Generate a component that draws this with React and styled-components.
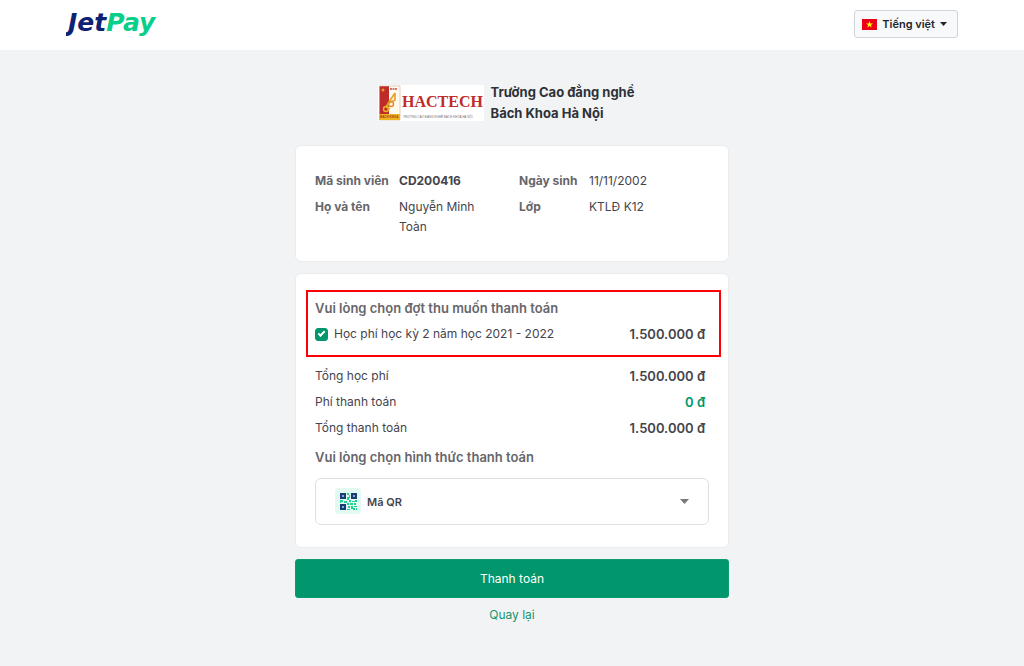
import React, { useState } from "react";
import styled, { createGlobalStyle } from "styled-components";

const GlobalStyle = createGlobalStyle`
  *, *::before, *::after { box-sizing: border-box; }
  body {
    margin: 0;
    background: #f2f3f5;
    color: #44444c;
    font-family: Inter, "Noto Sans", sans-serif;
    font-size: 13px;
    line-height: 20px;
  }
  button, select { font: inherit; color: inherit; }
`;

const Header = styled.header`
  background: #fff;
  padding: 0 24px;
`;

const HeaderInner = styled.div`
  max-width: 892px;
  min-height: 50px;
  margin: 0 auto;
  display: flex;
  align-items: center;
  justify-content: space-between;
`;

const HomeLink = styled.a`
  display: flex;
`;

const LanguageButton = styled.button`
  display: flex;
  align-items: center;
  gap: 5px;
  height: 28px;
  margin-top: -2px;
  padding: 0 10px 0 7px;
  border: 1px solid #d2d4d8;
  border-radius: 3px;
  background: #f8f9fa;
  color: #212529;
  font-size: 11px;
  font-weight: 600;
  cursor: pointer;
`;

const Main = styled.main`
  width: 100%;
  max-width: 434px;
  margin: 0 auto;
  padding: 32px 0 40px;
`;

const School = styled.div`
  display: flex;
  justify-content: center;
  align-items: center;
  gap: 7px;
  margin-bottom: 21px;
  padding-right: 12px;
`;

const SchoolName = styled.h1`
  margin: 0;
  color: #2d3138;
  font-size: 13px;
  line-height: 21px;
  font-weight: 700;
`;

const Card = styled.section`
  background: #fff;
  border: 1px solid #ebecee;
  border-radius: 6px;
  margin-bottom: 11px;
`;

const StudentCard = styled(Card)`
  padding: 25px 19px 24px;
`;

const StudentDetails = styled.dl`
  margin: 0;
  display: grid;
  grid-template-columns: 84px 1fr 70px 1fr;
  row-gap: 6px;
`;

const Term = styled.dt`
  color: #66666b;
  font-size: 12px;
  font-weight: 700;
  white-space: nowrap;
`;

const Detail = styled.dd`
  margin: 0;
  padding-right: 24px;
  font-size: 12px;
  font-weight: ${(p) => (p.$strong ? 700 : 400)};
`;

const PaymentCard = styled(Card)`
  padding: 16px 7px 22px 10px;
`;

const Highlight = styled.div`
  border: 2px solid #fb0007;
  padding: 6px 14px 11px 7px;
`;

const Heading = styled.h2`
  margin: 0;
  color: #66666b;
  font-size: 13px;
  line-height: 20px;
  font-weight: 600;
`;

const Row = styled.div`
  display: flex;
  justify-content: space-between;
  font-size: 12px;
`;

const Summary = styled.div`
  display: grid;
  gap: 6px;
  padding: 9px 16px 9px 9px;
`;

const Fee = styled(Row)`
  margin-top: 6px;
`;

const FeeLabel = styled.label`
  display: flex;
  align-items: center;
  gap: 6px;
`;

const Checkbox = styled.input`
  appearance: none;
  width: 13px;
  height: 13px;
  margin: 0;
  border: 1px solid #01966b;
  border-radius: 3px;
  background: #fff;
  display: grid;
  place-items: center;
  &:checked { background: #01966b; }
  &:checked::before {
    content: "";
    width: 7px;
    height: 4px;
    border: solid #fff;
    border-width: 0 0 2px 2px;
    transform: translateY(-1px) rotate(-45deg);
  }
`;

const Amount = styled.strong`
  font-size: 13px;
  font-weight: 600;
  color: ${(p) => (p.$free ? "#01966b" : "#44444c")};
`;

const Method = styled.div`
  padding: 0 12px 0 9px;
`;

const SelectBox = styled.div`
  position: relative;
  margin-top: 11px;
`;

const MethodSelect = styled.select`
  appearance: none;
  display: block;
  width: 100%;
  height: 47px;
  padding: 0 40px 0 51px;
  border: 1px solid #dfe0e3;
  border-radius: 6px;
  background: #fff;
  font-size: 11px;
  font-weight: 600;
`;

const QrIcon = styled.svg`
  position: absolute;
  left: 20px;
  top: 10px;
  pointer-events: none;
`;

const SelectCaret = styled.svg`
  position: absolute;
  right: 20px;
  top: 21px;
  pointer-events: none;
`;

const PayButton = styled.button`
  display: block;
  width: 100%;
  height: 39px;
  border: 1px solid #0b9b72;
  border-radius: 3px;
  background: #01966b;
  color: #fff;
  font-size: 12px;
  cursor: pointer;
`;

const BackLink = styled.a`
  display: block;
  width: fit-content;
  margin: 7px auto 0;
  color: #16966f;
  font-size: 12px;
  text-decoration: none;
`;

function JetPayLogo() {
  return (
    <svg width="100" height="38" viewBox="0 0 100 38" role="img" aria-label="JetPay">
      <text x="2" y="25" fontFamily="DejaVu Sans, sans-serif" fontSize="25" fontWeight="700" fontStyle="italic" fill="#0d2275">
        Jet<tspan fill="#08cf8a">Pay</tspan>
      </text>
    </svg>
  );
}

function VietnamFlag() {
  return (
    <svg width="15" height="11" viewBox="0 0 15 11" aria-hidden="true">
      <path fill="#ec0015" d="M0 0h15v11H0z" />
      <path fill="#ff0" d="m7.5 2 .85 2.5H11L8.9 6l.8 2.6-2.2-1.6-2.2 1.6L6.1 6 4 4.500h2.650z" />
    </svg>
  );
}

function HactechLogo() {
  return (
    <svg width="106" height="38" viewBox="0 0 106 38" role="img" aria-label="HACTECH">
      <path fill="#fff" d="M0 1h106v36H0z" />
      <path fill="#bd2b2b" d="M1 2h10v29H1z" />
      <path fill="#fffaf0" d="M11 2h11v29H11z" />
      <path fill="none" stroke="#d8b9a4" strokeWidth=".7" d="M1.500 2h20.500v34H1.500z" />
      <circle cx="5" cy="6" r="1.500" fill="#e8982a" />
      <path d="M12 5h7" stroke="#c64b45" strokeWidth="1.700" strokeDasharray="2 .5" />
      <path d="m17 9-6 9-3 5m9-14v7l-6 3m-3 4 4 2" fill="none" stroke="#e6a12c" strokeWidth="1.700" />
      <circle cx="13" cy="20" r="2.500" fill="none" stroke="#df9228" strokeWidth="1.500" />
      <circle cx="8" cy="25" r="2.500" fill="none" stroke="#efb12a" strokeWidth="1.500" />
      <path fill="#efb520" d="M1 30h21v6H1z" />
      <text x="2" y="34" fontFamily="Liberation Sans, sans-serif" fontWeight="700" fontSize="3" fill="#a63a16">BACH KHOA</text>
      <text x="24" y="23" fontFamily="Liberation Serif, serif" fontWeight="700" fontSize="16" fill="#bd2b2b">HACTECH</text>
      <text x="25" y="34" fontFamily="Liberation Sans, sans-serif" fontSize="3" fill="#77736f">TRƯỜNG CAO ĐẲNG NGHỀ BÁCH KHOA HÀ NỘI</text>
    </svg>
  );
}

function MethodIcon() {
  return (
    <QrIcon width="26" height="26" viewBox="0 0 26 26" aria-hidden="true">
      <rect width="26" height="26" rx="3" fill="#e3faf2" />
      <g fill="none" stroke="#173e78" strokeWidth="2">
        <path d="M6 6h4v4H6zM17 6h4v4h-4zM6 17h4v4H6z" fill="#8ea5c4" />
      </g>
      <g fill="#20d391">
        <path d="M12 5h2v2h-2zM14 7h1v3h-1zM12 9h2v3h-2zM5 12h3v2H5zM9 13h3v2H9zM14 12h2v2h-2zM17 13h3v1h-3zM20 12h2v2h-2zM5 14h1v1H5zM12 15h2v2h-2zM15 15h3v2h-3zM19 15h2v2h-2zM13 18h2v2h-2zM16 18h2v3h-2zM19 18h3v1h-3zM12 21h3v1h-3zM18 20h2v2h-2zM21 20h1v2h-1z" />
      </g>
    </QrIcon>
  );
}

export default function App() {
  const [checked, setChecked] = useState(true);
  return (
    <>
      <GlobalStyle />
      <Header>
        <HeaderInner>
          <HomeLink href="#"><JetPayLogo /></HomeLink>
          <LanguageButton type="button" aria-haspopup="listbox">
            <VietnamFlag />
            <span>Tiếng việt</span>
            <svg width="7" height="4" viewBox="0 0 7 4" aria-hidden="true"><path d="M0 0h7L3.500 4z" fill="#212529" /></svg>
          </LanguageButton>
        </HeaderInner>
      </Header>
      <Main>
        <School>
          <HactechLogo />
          <SchoolName>Trường Cao đẳng nghề<br />Bách Khoa Hà Nội</SchoolName>
        </School>
        <StudentCard>
          <StudentDetails>
            <Term>Mã sinh viên</Term>
            <Detail $strong>CD200416</Detail>
            <Term>Ngày sinh</Term>
            <Detail>11/11/2002</Detail>
            <Term>Họ và tên</Term>
            <Detail>Nguyễn Minh Toàn</Detail>
            <Term>Lớp</Term>
            <Detail>KTLĐ K12</Detail>
          </StudentDetails>
        </StudentCard>
        <PaymentCard>
          <Highlight>
            <Heading>Vui lòng chọn đợt thu muốn thanh toán</Heading>
            <Fee>
              <FeeLabel>
                <Checkbox type="checkbox" checked={checked} onChange={(e) => setChecked(e.target.checked)} />
                Học phí học kỳ 2 năm học 2021 - 2022
              </FeeLabel>
              <Amount>1.500.000 đ</Amount>
            </Fee>
          </Highlight>
          <Summary>
            <Row><span>Tổng học phí</span><Amount>1.500.000 đ</Amount></Row>
            <Row><span>Phí thanh toán</span><Amount $free>0 đ</Amount></Row>
            <Row><span>Tổng thanh toán</span><Amount>1.500.000 đ</Amount></Row>
          </Summary>
          <Method>
            <Heading as="label" htmlFor="method">Vui lòng chọn hình thức thanh toán</Heading>
            <SelectBox>
              <MethodSelect id="method" defaultValue="qr">
                <option value="qr">Mã QR</option>
              </MethodSelect>
              <MethodIcon />
              <SelectCaret width="9" height="5" viewBox="0 0 9 5" aria-hidden="true"><path d="M0 0h9L4.500 5z" fill="#77777c" /></SelectCaret>
            </SelectBox>
          </Method>
        </PaymentCard>
        <PayButton type="button">Thanh toán</PayButton>
        <BackLink href="#">Quay lại</BackLink>
      </Main>
    </>
  );
}
